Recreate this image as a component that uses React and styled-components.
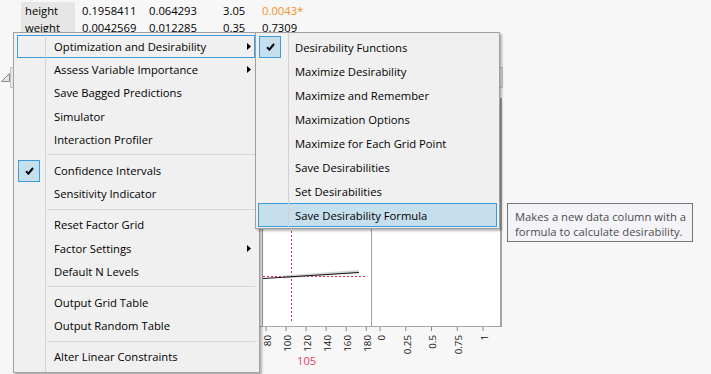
import React from "react";
import styled, { createGlobalStyle } from "styled-components";

const GlobalStyle = createGlobalStyle`
  html, body {
    margin: 0;
    padding: 0;
    background: #f7f7f7;
  }
  body {
    font-family: "Open Sans", "Noto Sans", sans-serif;
    font-size: 11.25px;
    color: #000;
  }
`;

const Page = styled.div`
  position: relative;
  width: 711px;
  height: 374px;
  overflow: hidden;
  background: #f7f7f7;
`;

// Report underneath the menus
const Report = styled.div`
  display: flex;
  flex-direction: column;
`;

const Table = styled.div`
  display: grid;
  grid-template-columns: 54px 74px 74px 39px 60px;
  grid-auto-rows: 17px;
  margin-left: 21px;
  padding-top: 2px;
  line-height: 17px;
  white-space: nowrap;
`;

const LabelCell = styled.div`
  background: #e6e6e6;
  padding-left: 4px;
`;

const ValueCell = styled.div`
  padding-left: ${(p) => (p.$first ? 7 : 0)}px;
  color: ${(p) => (p.$flag ? "#f0922e" : "#000")};
`;

const OutlineRow = styled.div`
  display: flex;
  align-items: center;
  height: 21px;
  margin-top: 31px;
`;

const Disclosure = styled.svg`
  width: 9px;
  height: 9px;
  margin: 0 0 0 1px;
  flex: none;
`;

const OutlineBar = styled.div`
  width: 493px;
  height: 21px;
  box-sizing: border-box;
  border: 1px solid #c4c4c4;
  background: #e9e9e9;
`;

const Frame = styled.div`
  display: grid;
  grid-template-columns: 241px 110px 1fr;
  width: 482px;
  height: 229px;
  box-sizing: border-box;
  margin: 10px 0 0 20px;
  background: #fff;
  border: 1px solid #a4a4a4;
  border-right-width: 2px;
`;

const PlotCell = styled.div`
  border-left: ${(p) => (p.$divided ? "1px solid #a0a0a0" : "none")};
  border-right: ${(p) => (p.$divided ? "1px solid #a0a0a0" : "none")};
  overflow: hidden;
`;

const AxisStrip = styled.div`
  display: flex;
  margin-left: 262px;
`;

// Menus
const Menu = styled.ul`
  position: absolute;
  left: ${(p) => p.$left}px;
  top: ${(p) => p.$top}px;
  width: ${(p) => p.$width}px;
  margin: 0;
  padding: 2px 0 ${(p) => p.$padBottom}px;
  list-style: none;
  box-sizing: border-box;
  background: #f0f0f0;
  border: 1px solid #a0a0a0;
  box-shadow: 2px 2px 2px rgba(0, 0, 0, 0.28);
  z-index: ${(p) => p.$z};

  &::before {
    content: "";
    position: absolute;
    top: 0;
    bottom: 0;
    left: ${(p) => p.$gutter}px;
    width: 1px;
    background: #d2d2d2;
    z-index: 2;
  }
`;

const Item = styled.li`
  position: relative;
  display: flex;
  align-items: center;
  height: ${(p) => p.$h}px;
  margin: 0 ${(p) => p.$mr}px 0 ${(p) => p.$ml}px;
  box-sizing: border-box;
  border: 1px solid ${(p) => (p.$state ? "#3d9bd9" : "transparent")};
  background: ${(p) => (p.$state === "active" ? "#c5dfed" : "transparent")};
  white-space: nowrap;
`;

const CheckCell = styled.span`
  display: flex;
  align-items: center;
  justify-content: center;
  width: 22px;
  height: 22px;
  flex: none;
  box-sizing: border-box;
  border: 1px solid ${(p) => (p.$on ? "#3d9bd9" : "transparent")};
  background: ${(p) => (p.$on ? "#c5dfed" : "transparent")};
`;

const Label = styled.span`
  flex: 1;
  margin-left: 14px;
`;

const Arrow = styled.svg`
  width: 4px;
  height: 7px;
  margin-right: 3px;
  flex: none;
`;

const Separator = styled.li`
  height: 8px;
  display: flex;
  align-items: center;
  margin: 0 4px 0 33px;

  &::after {
    content: "";
    flex: 1;
    height: 1px;
    background: #d6d6d6;
  }
`;

const Tooltip = styled.div`
  position: absolute;
  left: 507px;
  top: 203px;
  width: 186px;
  height: 39px;
  box-sizing: border-box;
  padding: 5px 0 0 7px;
  border: 1px solid #767676;
  background: #f4f4f8;
  color: #4d4d4d;
  line-height: 15px;
  white-space: nowrap;
  z-index: 5;
`;

const rows = [
  ["height", "0.1958411", "0.064293", "3.05", "0.0043*"],
  ["weight", "0.0042569", "0.012285", "0.35", "0.7309"],
];

const mainItems = [
  { label: "Optimization and Desirability", sub: true, state: "open" },
  { label: "Assess Variable Importance", sub: true },
  { label: "Save Bagged Predictions" },
  { label: "Simulator" },
  { label: "Interaction Profiler" },
  { sep: true },
  { label: "Confidence Intervals", checked: true },
  { label: "Sensitivity Indicator" },
  { sep: true },
  { label: "Reset Factor Grid" },
  { label: "Factor Settings", sub: true },
  { label: "Default N Levels" },
  { sep: true },
  { label: "Output Grid Table" },
  { label: "Output Random Table" },
  { sep: true },
  { label: "Alter Linear Constraints" },
];

const subItems = [
  { label: "Desirability Functions", checked: true },
  { label: "Maximize Desirability" },
  { label: "Maximize and Remember" },
  { label: "Maximization Options" },
  { label: "Maximize for Each Grid Point" },
  { label: "Save Desirabilities" },
  { label: "Set Desirabilities" },
  { label: "Save Desirability Formula", state: "active" },
];

function Check() {
  return (
    <svg width="9" height="8" viewBox="0 0 9 8">
      <path d="M1 4.2 L3.4 6.6 L8 1" fill="none" stroke="#000" strokeWidth="2" />
    </svg>
  );
}

function MenuList({ items, h, ml, mr }) {
  return items.map((it, i) =>
    it.sep ? (
      <Separator key={i} />
    ) : (
      <Item key={i} $h={h} $ml={ml} $mr={mr} $state={it.state}>
        <CheckCell $on={it.checked}>{it.checked && <Check />}</CheckCell>
        <Label>{it.label}</Label>
        {it.sub && (
          <Arrow viewBox="0 0 4 7">
            <polygon points="0,0 4,3.5 0,7" fill="#000" />
          </Arrow>
        )}
      </Item>
    )
  );
}

const xTicks = [80, 100, 120, 140, 160, 180];
const dTicks = [
  [0, "0"],
  [0.25, "0.25"],
  [0.5, "0.5"],
  [0.75, "0.75"],
  [1, "1"],
];

function Axis() {
  const xa = (v) => 266 + (v - 80) * 1.003 - 262;
  const xd = (v) => 380 + v * 103 - 262;
  const ticks = [
    ...xTicks.map((v) => [xa(v), String(v)]),
    ...dTicks.map(([v, t]) => [xd(v), t]),
  ];
  return (
    <svg width="240" height="47" style={{ display: "block" }}>
      {ticks.map(([x, t]) => (
        <g key={t + x}>
          <line x1={x} x2={x} y1="0" y2="4" stroke="#888" strokeWidth="1" />
          <text
            transform={`translate(${x + 1.3} 8) rotate(-90)`}
            textAnchor="end"
            dominantBaseline="central"
            fontFamily='"Open Sans", "Noto Sans", sans-serif'
            fontSize="9.75"
            fill="#111"
          >
            {t}
          </text>
        </g>
      ))}
      <text
        x="35"
        y="33"
        dominantBaseline="central"
        fontFamily='"Open Sans", "Noto Sans", sans-serif'
        fontSize="11.25"
        fill="#e8415f"
      >
        105
      </text>
    </svg>
  );
}

function ProfilePlot() {
  return (
    <svg width="108" height="228" style={{ display: "block" }}>
      <line x1="28.5" x2="28.5" y1="0" y2="224" stroke="#e0304a" strokeDasharray="2 2" />
      <line x1="0" x2="102" y1="177.5" y2="177.5" stroke="#e0304a" strokeDasharray="2 2" />
      <line x1="20" y1="178" x2="96" y2="172.5" stroke="#b8b8b8" strokeWidth="3" opacity="0.6" />
      <line x1="0" y1="179.5" x2="96" y2="173.5" stroke="#111" strokeWidth="1.2" />
    </svg>
  );
}

export default function App() {
  return (
    <Page>
      <GlobalStyle />
      <Report>
        <Table>
          {rows.map((r) => (
            <React.Fragment key={r[0]}>
              <LabelCell>{r[0]}</LabelCell>
              <ValueCell $first>{r[1]}</ValueCell>
              <ValueCell>{r[2]}</ValueCell>
              <ValueCell>{r[3]}</ValueCell>
              <ValueCell $flag={r[4].endsWith("*")}>{r[4]}</ValueCell>
            </React.Fragment>
          ))}
        </Table>
        <OutlineRow>
          <Disclosure viewBox="0 0 9 9">
            <polygon points="8.5,0.5 8.5,8.5 0.5,8.5" fill="#e4e4e4" stroke="#8a8a8a" />
          </Disclosure>
          <OutlineBar />
        </OutlineRow>
        <Frame>
          <div />
          <PlotCell $divided>
            <ProfilePlot />
          </PlotCell>
          <PlotCell />
        </Frame>
        <AxisStrip>
          <Axis />
        </AxisStrip>
      </Report>

      <Menu $left={13} $top={32} $width={247} $gutter={31} $padBottom={4} $z={3}>
        <MenuList items={mainItems} h={23.2} ml={3} mr={4} />
      </Menu>
      <Menu $left={255} $top={32} $width={245} $gutter={32} $padBottom={1} $z={4}>
        <MenuList items={subItems} h={24} ml={2} mr={2} />
      </Menu>
      <Tooltip>
        Makes a new data column with a
        <br />
        formula to calculate desirability.
      </Tooltip>
    </Page>
  );
}
